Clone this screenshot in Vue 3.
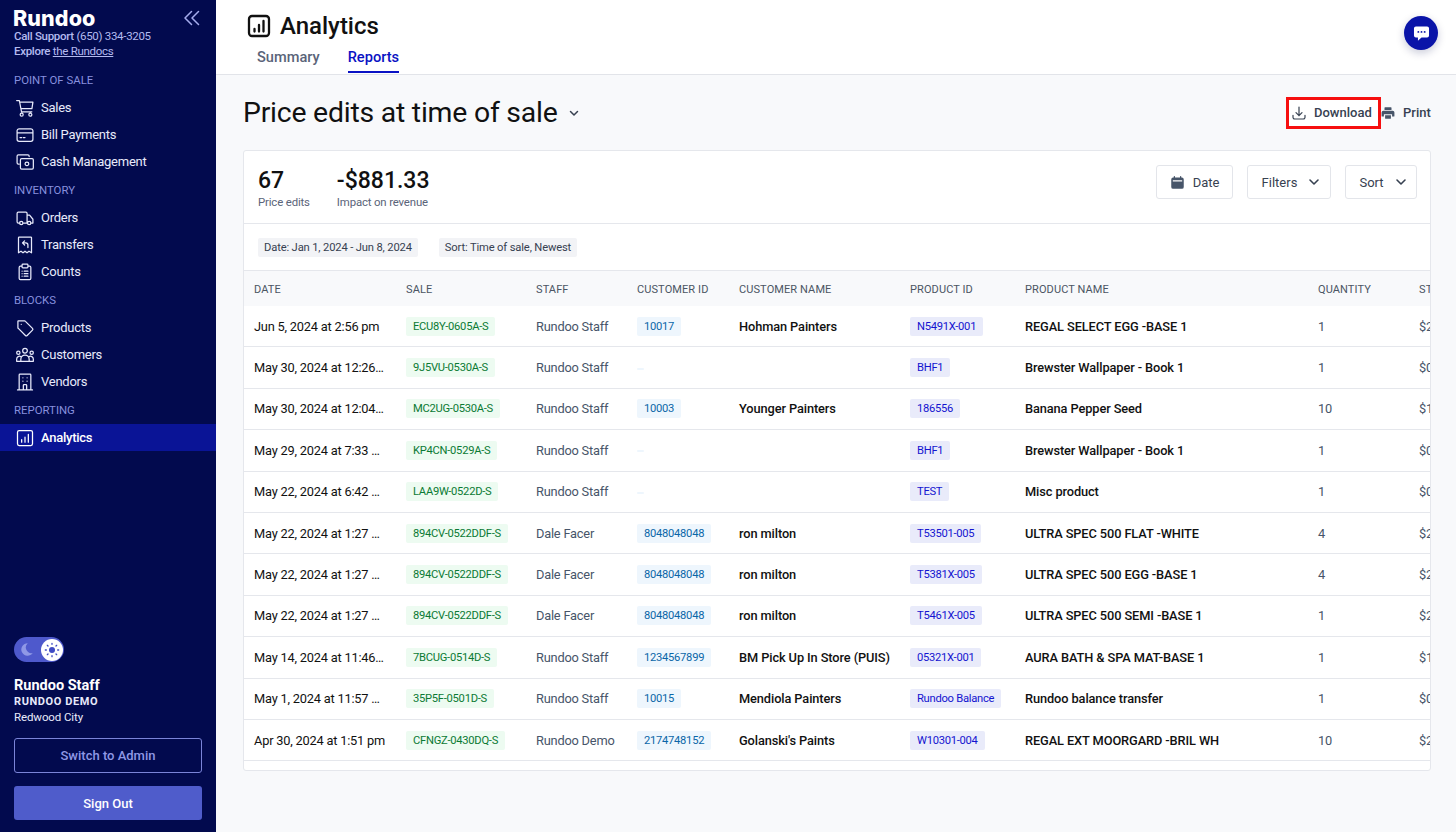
<script setup>
const navGroups = [
  { title: 'POINT OF SALE', items: [
    { label: 'Sales', d: 'M2 3h3.200l2.600 13.500h12.400M5.600 5H21.500l-1.200 7.800H7.100M9.800 20a1.800 1.800 0 1 1-3.600 0 1.800 1.800 0 0 1 3.600 0Zm10.400 0a1.800 1.800 0 1 1-3.600 0 1.800 1.800 0 0 1 3.600 0Z' },
    { label: 'Bill Payments', d: 'M5 4.500h14a2.500 2.500 0 0 1 2.500 2.500v10a2.500 2.500 0 0 1-2.500 2.500H5A2.500 2.500 0 0 1 2.500 17V7A2.500 2.500 0 0 1 5 4.500Zm-2.500 5h19M6 15h2m2 0h2' },
    { label: 'Cash Management', d: 'M17 5.500V5a1.500 1.500 0 0 0-1.500-1.500H4A1.500 1.500 0 0 0 2.500 5v8A1.500 1.500 0 0 0 4 14.500h1M8 8h12.500A1.500 1.500 0 0 1 22 9.500V19a1.500 1.500 0 0 1-1.500 1.500H8A1.500 1.500 0 0 1 6.500 19V9.500A1.500 1.500 0 0 1 8 8Zm8.500 6.200a2.200 2.200 0 1 1-4.400 0 2.200 2.200 0 0 1 4.400 0Z' },
  ]},
  { title: 'INVENTORY', items: [
    { label: 'Orders', d: 'M6 18H4a1.500 1.500 0 0 1-1.500-1.500v-10A1.500 1.500 0 0 1 4 5h9a1.500 1.500 0 0 1 1.500 1.500V18M10.500 18h4M14.500 8.500h3l4 5V18h-2M9.500 18a2 2 0 1 1-4 0 2 2 0 0 1 4 0Zm9.500 0a2 2 0 1 1-4 0 2 2 0 0 1 4 0Z' },
    { label: 'Transfers', d: 'M5 2.500h14a.8.8 0 0 1 .8.8v18l-3-1.800-2.400 1.800-2.400-1.800-2.400 1.800-2.400-1.800-3 1.800v-18a.8.8 0 0 1 .8-.8ZM9 9.500l2.500-2.500M9 9.500 11.500 12M9 9.500h4a2.500 2.500 0 0 1 2.500 2.500v3' },
    { label: 'Counts', d: 'M8.500 5H6.500A1.500 1.500 0 0 0 5 6.500v13A1.500 1.500 0 0 0 6.500 21h11a1.500 1.500 0 0 0 1.500-1.500v-13A1.500 1.500 0 0 0 17.500 5h-2M8.500 3.500a1 1 0 0 1 1-1h5a1 1 0 0 1 1 1V6a1 1 0 0 1-1 1h-5a1 1 0 0 1-1-1ZM8.500 11h.01M8.500 14h.01M8.500 17h.01M11 11h4.500M11 14h4.500M11 17h4.500' },
  ]},
  { title: 'BLOCKS', items: [
    { label: 'Products', d: 'M4 3.500h7.500a1.500 1.500 0 0 1 1 .5l8.500 8.500a1.500 1.500 0 0 1 0 2.100l-6.400 6.400a1.500 1.500 0 0 1-2.100 0L4 12.500a1.500 1.500 0 0 1-.5-1V4a.5.5 0 0 1 .5-.5ZM7.500 7.500h.01' },
    { label: 'Customers', d: 'M14.800 6.800a2.800 2.800 0 1 1-5.600 0 2.800 2.800 0 0 1 5.600 0ZM22 9.300a2 2 0 1 1-4 0 2 2 0 0 1 4 0ZM6 9.300a2 2 0 1 1-4 0 2 2 0 0 1 4 0ZM7 19.500v-2.500a5 5 0 0 1 10 0v2.500ZM7 19.500H2v-2.500a3.500 3.500 0 0 1 5.300-3M17 19.500h5v-2.500a3.500 3.500 0 0 0-5.300-3' },
    { label: 'Vendors', d: 'M3 21.500h18M5 21.500V3.500A1 1 0 0 1 6 2.500h12a1 1 0 0 1 1 1v18M9.500 7h.01M14.500 7h.01M9.500 11h.01M14.500 11h.01M10 21.500V16a1 1 0 0 1 1-1h2a1 1 0 0 1 1 1v5.500' },
  ]},
  { title: 'REPORTING', items: [
    { label: 'Analytics', active: true, d: 'M5 3h14a2 2 0 0 1 2 2v14a2 2 0 0 1-2 2H5a2 2 0 0 1-2-2V5a2 2 0 0 1 2-2Zm3 14v-3m4 3V11m4 6V7.500' },
  ]},
]

const columns = ['DATE', 'SALE', 'STAFF', 'CUSTOMER ID', 'CUSTOMER NAME', 'PRODUCT ID', 'PRODUCT NAME', 'QUANTITY', 'ST']

const rows = [
  ['Jun 5, 2024 at 2:56 pm', 'ECU8Y-0605A-S', 'Rundoo Staff', '10017', 'Hohman Painters', 'N5491X-001', 'REGAL SELECT EGG -BASE 1', '1', '$2'],
  ['May 30, 2024 at 12:26…', '9J5VU-0530A-S', 'Rundoo Staff', '', '', 'BHF1', 'Brewster Wallpaper - Book 1', '1', '$0'],
  ['May 30, 2024 at 12:04…', 'MC2UG-0530A-S', 'Rundoo Staff', '10003', 'Younger Painters', '186556', 'Banana Pepper Seed', '10', '$1'],
  ['May 29, 2024 at 7:33 …', 'KP4CN-0529A-S', 'Rundoo Staff', '', '', 'BHF1', 'Brewster Wallpaper - Book 1', '1', '$0'],
  ['May 22, 2024 at 6:42 …', 'LAA9W-0522D-S', 'Rundoo Staff', '', '', 'TEST', 'Misc product', '1', '$0'],
  ['May 22, 2024 at 1:27 …', '894CV-0522DDF-S', 'Dale Facer', '8048048048', 'ron milton', 'T53501-005', 'ULTRA SPEC 500 FLAT -WHITE', '4', '$2'],
  ['May 22, 2024 at 1:27 …', '894CV-0522DDF-S', 'Dale Facer', '8048048048', 'ron milton', 'T5381X-005', 'ULTRA SPEC 500 EGG -BASE 1', '4', '$2'],
  ['May 22, 2024 at 1:27 …', '894CV-0522DDF-S', 'Dale Facer', '8048048048', 'ron milton', 'T5461X-005', 'ULTRA SPEC 500 SEMI -BASE 1', '1', '$2'],
  ['May 14, 2024 at 11:46…', '7BCUG-0514D-S', 'Rundoo Staff', '1234567899', 'BM Pick Up In Store (PUIS)', '05321X-001', 'AURA BATH & SPA MAT-BASE 1', '1', '$1'],
  ['May 1, 2024 at 11:57 …', '35P5F-0501D-S', 'Rundoo Staff', '10015', 'Mendiola Painters', 'Rundoo Balance', 'Rundoo balance transfer', '1', '$0'],
  ['Apr 30, 2024 at 1:51 pm', 'CFNGZ-0430DQ-S', 'Rundoo Demo', '2174748152', "Golanski's Paints", 'W10301-004', 'REGAL EXT MOORGARD -BRIL WH', '10', '$2'],
]
</script>

<template>
  <div class="page">
    <aside class="sidebar">
      <div class="brand">
        <div class="brand-top">
          <span class="logo">Rundoo</span>
          <svg class="collapse" viewBox="0 0 16 16" fill="none" stroke="currentColor" stroke-width="1.500" stroke-linecap="round" stroke-linejoin="round">
            <path d="M7.500 1.500 1 8l6.500 6.500M14.500 1.500 8 8l6.500 6.500" />
          </svg>
        </div>
        <div class="support"><b>Call Support</b> (650) 334-3205</div>
        <div class="support"><b>Explore</b> <u>the Rundocs</u></div>
      </div>

      <nav class="nav">
        <section v-for="group in navGroups" :key="group.title">
          <div class="nav-title">{{ group.title }}</div>
          <a v-for="item in group.items" :key="item.label" class="nav-item" :class="{ active: item.active }">
            <svg viewBox="0 0 24 24" fill="none" stroke="currentColor" stroke-width="1.500" stroke-linecap="round" stroke-linejoin="round">
              <path :d="item.d" />
            </svg>
            <span>{{ item.label }}</span>
          </a>
        </section>
      </nav>

      <div class="foot">
        <div class="toggle">
          <svg class="moon" viewBox="0 0 24 24" fill="#8f98e6"><path d="M14 2a10 10 0 1 0 8 15.500A9 9 0 0 1 14 2Z" /></svg>
          <span class="knob">
            <svg viewBox="0 0 24 24" fill="#3f4bc4" stroke="#3f4bc4" stroke-width="2" stroke-linecap="round">
              <circle cx="12" cy="12" r="4.500" stroke="none" />
              <path d="M12 2v1.500M12 20.500V22M2 12h1.500M20.500 12H22M5 5l1 1M18 18l1 1M5 19l1-1M18 6l1-1" />
            </svg>
          </span>
        </div>
        <div class="user">Rundoo Staff</div>
        <div class="org">RUNDOO DEMO</div>
        <div class="city">Redwood City</div>
        <button class="btn-outline">Switch to Admin</button>
        <button class="btn-solid">Sign Out</button>
      </div>
    </aside>

    <main class="main">
      <header class="topbar">
        <div class="heading">
          <svg viewBox="0 0 24 24" fill="none" stroke="#111" stroke-width="2.300" stroke-linecap="round" stroke-linejoin="round">
            <path d="M5 2h14a3 3 0 0 1 3 3v14a3 3 0 0 1-3 3H5a3 3 0 0 1-3-3V5a3 3 0 0 1 3-3Zm2.500 15.500v-2.500m4.500 2.500V11m4.500 6.500V7" />
          </svg>
          <h1>Analytics</h1>
        </div>
        <div class="tabs">
          <a class="tab">Summary</a>
          <a class="tab current">Reports</a>
        </div>
        <button class="chat" aria-label="Chat">
          <svg viewBox="0 0 24 24" fill="#fff"><path d="M5 3h14a2.500 2.500 0 0 1 2.500 2.500v9A2.500 2.500 0 0 1 19 17h-7l-4.500 4v-4H5a2.500 2.500 0 0 1-2.500-2.500v-9A2.500 2.500 0 0 1 5 3Z" /><g fill="#0a14a8"><circle cx="8" cy="10" r="1.200" /><circle cx="12" cy="10" r="1.200" /><circle cx="16" cy="10" r="1.200" /></g></svg>
        </button>
      </header>

      <div class="content">
        <div class="title-row">
          <h2>Price edits at time of sale</h2>
          <svg class="title-caret" viewBox="0 0 12 12" fill="none" stroke="#374151" stroke-width="1.500" stroke-linecap="round" stroke-linejoin="round"><path d="M2.500 4.500 6 8l3.500-3.500" /></svg>
          <div class="actions">
            <button class="download">
              <svg viewBox="0 0 24 24" fill="none" stroke="#374151" stroke-width="1.800" stroke-linecap="round" stroke-linejoin="round"><path d="M3 15.500v3A2.500 2.500 0 0 0 5.500 21h13a2.500 2.500 0 0 0 2.500-2.500v-3M12 3v13m-4.500-4.500L12 16l4.500-4.500" /></svg>
              Download
            </button>
            <button class="print">
              <svg viewBox="0 0 24 24" fill="#475569"><path d="M7 2h10a1 1 0 0 1 1 1v4H6V3a1 1 0 0 1 1-1ZM4 8h16a3 3 0 0 1 3 3v6a1 1 0 0 1-1 1h-3v-4H5v4H2a1 1 0 0 1-1-1v-6a3 3 0 0 1 3-3Zm3 8h10v5a1 1 0 0 1-1 1H8a1 1 0 0 1-1-1Z" /></svg>
              Print
            </button>
          </div>
        </div>

        <section class="card">
          <div class="stats-row">
            <div class="stat">
              <strong>67</strong>
              <span>Price edits</span>
            </div>
            <div class="stat">
              <strong>-$881.33</strong>
              <span>Impact on revenue</span>
            </div>
            <div class="controls">
              <button class="ctl ctl-date">
                <svg viewBox="0 0 24 24" fill="#475569"><path d="M7 1.500a1 1 0 0 1 1 1V4h8V2.500a1 1 0 1 1 2 0V4h1a3 3 0 0 1 3 3v12a3 3 0 0 1-3 3H5a3 3 0 0 1-3-3V7a3 3 0 0 1 3-3h1V2.500a1 1 0 0 1 1-1ZM4.500 8.500v2h15v-2Z" /></svg>
                Date
              </button>
              <button class="ctl ctl-filters">
                Filters
                <svg viewBox="0 0 12 12" fill="none" stroke="#374151" stroke-width="1.600" stroke-linecap="round" stroke-linejoin="round"><path d="M2 4l4 4 4-4" /></svg>
              </button>
              <button class="ctl ctl-sort">
                Sort
                <svg viewBox="0 0 12 12" fill="none" stroke="#374151" stroke-width="1.600" stroke-linecap="round" stroke-linejoin="round"><path d="M2 4l4 4 4-4" /></svg>
              </button>
            </div>
          </div>

          <div class="chips">
            <span>Date: Jan 1, 2024 - Jun 8, 2024</span>
            <span>Sort: Time of sale, Newest</span>
          </div>

          <div class="grid-head row">
            <div v-for="c in columns" :key="c">{{ c }}</div>
          </div>
          <div v-for="(r, i) in rows" :key="i" class="row body-row">
            <div class="date">{{ r[0] }}</div>
            <div><span class="pill green">{{ r[1] }}</span></div>
            <div class="muted">{{ r[2] }}</div>
            <div><span class="pill blue" :class="{ empty: !r[3] }">{{ r[3] }}</span></div>
            <div class="strong">{{ r[4] }}</div>
            <div><span class="pill indigo">{{ r[5] }}</span></div>
            <div class="strong">{{ r[6] }}</div>
            <div class="muted">{{ r[7] }}</div>
            <div class="muted">{{ r[8] }}</div>
          </div>
          <div class="card-end"></div>
        </section>
      </div>
    </main>
  </div>
</template>

<style scoped>
.page {
  display: flex;
  width: 1456px;
  height: 832px;
  overflow: hidden;
  font-family: Roboto, "Noto Sans", sans-serif;
  font-size: 13px;
  background: #f8f9fb;
  color: #111;
}
button { font-family: inherit; cursor: pointer; }

/* Sidebar */
.sidebar {
  width: 216px;
  flex: none;
  display: flex;
  flex-direction: column;
  background: #020a4e;
  color: #e8eafb;
}
.brand { padding: 6px 14px 0; height: 59px; box-sizing: border-box; }
.brand-top { display: flex; justify-content: space-between; align-items: center; height: 23px; margin-left: -1px; }
.logo { font-family: Inter, sans-serif; font-weight: 800; font-size: 21.500px; color: #fff; letter-spacing: 0.100px; }
.collapse { width: 16px; height: 16px; color: #a5acec; margin-right: 2px; }
.support { font-size: 11.500px; line-height: 15px; letter-spacing: -0.300px; color: #b4baf0; white-space: nowrap; }
.support b { font-weight: 500; }
.nav { margin-top: 6px; }
.nav-title {
  height: 29px;
  line-height: 31px;
  padding-left: 14px;
  font-size: 11.400px;
  color: #8790de;
}
.nav-item {
  display: flex;
  align-items: center;
  gap: 6px;
  height: 27px;
  padding-left: 15px;
  font-size: 13px;
  letter-spacing: -0.250px;
  color: #e8eafb;
}
.nav-item svg { width: 20px; height: 20px; flex: none; }
.nav-item.active { background: #0a1496; color: #fff; font-weight: 500; }
.foot { margin-top: auto; padding: 0 14px 12px; display: flex; flex-direction: column; align-items: flex-start; }
.toggle {
  position: relative;
  width: 50px;
  height: 25px;
  border-radius: 13px;
  background: #4e59cc;
  display: flex;
  align-items: center;
  justify-content: space-between;
  padding: 0 1px 0 5px;
  box-sizing: border-box;
}
.moon { width: 15px; height: 15px; }
.knob { width: 22px; height: 22px; border-radius: 50%; background: #fff; display: flex; align-items: center; justify-content: center; }
.knob svg { width: 16px; height: 16px; }
.user { margin-top: 15px; font-size: 14.500px; line-height: 17px; font-weight: 700; color: #fff; }
.org { font-size: 11px; line-height: 15px; font-weight: 700; letter-spacing: 0.600px; color: #e8eafb; }
.city { font-size: 11.500px; line-height: 16px; letter-spacing: -0.100px; color: #e8eafb; }
.btn-outline, .btn-solid { width: 188px; border-radius: 3px; font-size: 13px; font-weight: 500; }
.btn-outline { margin-top: 13px; height: 35px; background: transparent; border: 1px solid #7a84d8; color: #8f98e6; }
.btn-solid { margin-top: 13px; height: 34px; background: #4f5ccb; border: 0; color: #fff; }

/* Main */
.main { flex: 1; min-width: 0; display: flex; flex-direction: column; }
.topbar {
  position: relative;
  height: 75px;
  flex: none;
  box-sizing: border-box;
  background: #fff;
  border-bottom: 1px solid #e2e4e9;
  padding: 12px 0 0 31px;
}
.heading { display: flex; align-items: center; gap: 9px; height: 28px; }
.heading svg { width: 24px; height: 24px; }
h1 { margin: 0; font-size: 24px; line-height: 28px; font-weight: 500; color: #111; }
.tabs { display: flex; gap: 28px; margin-top: 5px; padding-left: 10px; }
.tab { display: block; height: 28px; box-sizing: border-box; line-height: 24px; font-size: 14.600px; font-weight: 500; color: #5a6479; }
.tab.current { color: #0a12c4; border-bottom: 2px solid #0a12c4; }
.chat {
  position: absolute;
  top: 16px;
  right: 18px;
  width: 34px;
  height: 34px;
  border: 0;
  border-radius: 50%;
  padding: 0;
  background: #0a14a8;
  box-shadow: 0 3px 8px rgba(10, 20, 80, .22);
  display: flex;
  align-items: center;
  justify-content: center;
}
.chat svg { width: 19px; height: 19px; }

.content { padding: 0 25px 0 27px; }
.title-row { display: flex; align-items: center; height: 75px; }
h2 { margin: 0; font-size: 28.400px; letter-spacing: -0.220px; font-weight: 400; color: #111; white-space: nowrap; }
.title-caret { width: 12px; height: 12px; margin-left: 10px; }
.actions { margin-left: auto; display: flex; align-items: center; }
.download {
  width: 95px;
  height: 32px;
  box-sizing: border-box;
  border: 3px solid #f60f0f;
  background: #fff;
  padding: 0 0 0 2px;
  display: flex;
  align-items: center;
  gap: 7px;
  font-size: 13px;
  font-weight: 500;
  color: #374151;
  white-space: nowrap;
}
.download svg { width: 16px; height: 16px; flex: none; }
.print {
  border: 0;
  background: none;
  padding: 0;
  display: flex;
  align-items: center;
  gap: 8px;
  font-size: 13px;
  font-weight: 500;
  color: #374151;
  width: 50px;
  white-space: nowrap;
}
.print svg { width: 14px; height: 14px; flex: none; }

.card {
  height: 621px;
  box-sizing: border-box;
  border: 1px solid #e5e7ec;
  border-radius: 3px;
  background: #fff;
  overflow: hidden;
}
.stats-row { display: flex; align-items: center; height: 72px; padding: 0 13px 0 14px; gap: 27px; border-bottom: 1px solid #e5e7ec; }
.stat { display: flex; flex-direction: column; }
.stat strong { padding-top: 2px; font-size: 23px; line-height: 29px; font-weight: 500; color: #111; }
.stat span { font-size: 11.400px; line-height: 15px; letter-spacing: -0.150px; color: #5a6479; }
.controls { margin-left: auto; display: flex; gap: 14px; align-self: flex-start; margin-top: 14px; }
.ctl {
  height: 34px;
  box-sizing: border-box;
  background: #fff;
  border: 1px solid #e3e5ea;
  border-radius: 3px;
  padding: 0;
  display: flex;
  align-items: center;
  justify-content: center;
  gap: 8px;
  font-size: 13px;
  color: #374151;
}
.ctl-date { width: 77px; }
.ctl-date svg { width: 15px; height: 15px; }
.ctl-filters { width: 84px; gap: 11px; padding-left: 4px; }
.ctl-sort { width: 72px; gap: 11px; padding-left: 4px; }
.ctl-filters svg, .ctl-sort svg { width: 12px; height: 12px; }
.chips { display: flex; align-items: center; gap: 21px; height: 46px; padding-left: 14px; border-bottom: 1px solid #e5e7ec; }
.chips span { height: 19px; line-height: 19px; padding: 0 6px; border-radius: 2px; background: #f2f3f6; font-size: 11.200px; letter-spacing: -0.150px; color: #374151; white-space: nowrap; }

.row {
  display: grid;
  grid-template-columns: 152px 130px 101px 102px 171px 115px 293px 101px 100px;
  align-items: center;
  width: 1265px;
  white-space: nowrap;
}
.row > div { padding-left: 10px; overflow: hidden; }
.grid-head { height: 35px; padding-top: 1px; box-sizing: border-box; background: #f8f9fb; font-size: 11px; letter-spacing: 0.100px; color: #4b5563; }
.body-row { height: 41.400px; box-sizing: border-box; border-bottom: 1px solid #e5e7ec; font-size: 12.800px; letter-spacing: -0.200px; }
.date { color: #111; }
.muted { color: #475569; }
.strong { color: #111; font-weight: 500; letter-spacing: -0.100px; }
.pill { display: inline-block; height: 19px; line-height: 19px; padding: 0 7px; border-radius: 2px; font-size: 11.200px; letter-spacing: -0.270px; vertical-align: middle; }
.green { background: #edfbf1; color: #0b7a34; }
.blue { background: #eef6fd; color: #0a66a8; }
.blue.empty { height: 2px; width: 7px; padding: 0; }
.indigo { background: #e9ebfa; color: #1414d0; }
.card-end { height: 10px; }
</style>

<style>
html, body { margin: 0; }
</style>
